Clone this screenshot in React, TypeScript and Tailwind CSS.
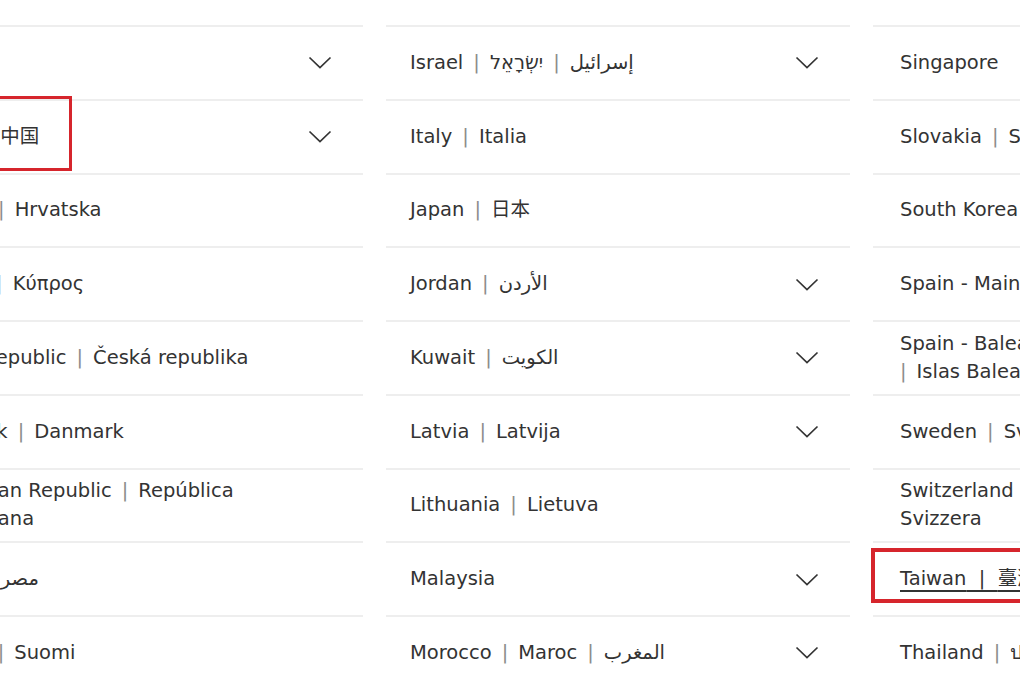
import type { ReactNode } from "react";

type Country = {
  names?: string[];
  custom?: ReactNode;
  menu?: boolean;
  link?: boolean;
};

function Pipe({ dark }: { dark?: boolean }) {
  if (dark) return <span>{"\u00a0 | \u00a0"}</span>;
  return <span className="mx-[10px] text-[#8c8c8c]">|</span>;
}

const columns: Country[][] = [
  [
    { names: ["Bulgaria", "България"] },
    { names: ["Canada"], menu: true },
    { names: ["China", "中国"], menu: true },
    { names: ["Croatia", "Hrvatska"] },
    { names: ["Cyprus", "Κύπρος"] },
    { names: ["Czech Republic", "Česká republika"] },
    { names: ["Denmark", "Danmark"] },
    {
      custom: (
        <>
          Dominican Republic<Pipe />República
          <br />
          Dominicana
        </>
      ),
    },
    { names: ["Egypt", "مصر"] },
    { names: ["Finland", "Suomi"] },
  ],
  [
    { names: ["Ireland", "Éire"] },
    { names: ["Israel", "יִשְׂרָאֵל", "إسرائيل"], menu: true },
    { names: ["Italy", "Italia"] },
    { names: ["Japan", "日本"] },
    { names: ["Jordan", "الأردن"], menu: true },
    { names: ["Kuwait", "الكويت"], menu: true },
    { names: ["Latvia", "Latvija"], menu: true },
    { names: ["Lithuania", "Lietuva"] },
    { names: ["Malaysia"], menu: true },
    { names: ["Morocco", "Maroc", "المغرب"], menu: true },
  ],
  [
    { names: ["Serbia", "Srbija"] },
    { names: ["Singapore"] },
    { names: ["Slovakia", "Slovensko"] },
    { names: ["South Korea", "대한민국"] },
    { names: ["Spain - Mainland", "España"] },
    {
      custom: (
        <>
          Spain - Balearic Islands
          <br />
          <span className="text-[#8c8c8c] mr-[10px]">|</span>Islas Baleares
        </>
      ),
    },
    { names: ["Sweden", "Sverige"] },
    {
      custom: (
        <>
          Switzerland<Pipe />Schweiz<Pipe />Suisse<Pipe />
          <br />
          Svizzera
        </>
      ),
    },
    { names: ["Taiwan", "臺灣"], link: true },
    { names: ["Thailand", "ประเทศไทย"] },
  ],
];

function Chevron() {
  return (
    <svg width="24" height="13" viewBox="0 0 24 13" fill="none" className="shrink-0">
      <polyline points="1.5,1.5 12,11.5 22.5,1.5" stroke="#333" strokeWidth="1.7" />
    </svg>
  );
}

function Label({ c }: { c: Country }) {
  if (c.custom) return <span>{c.custom}</span>;
  return (
    <span className={c.link ? "underline decoration-[1.5px] underline-offset-[5px]" : ""}>
      {c.names!.map((n, i) => (
        <span key={i}>
          {i > 0 && <Pipe dark={c.link} />}
          <bdi>{n}</bdi>
        </span>
      ))}
    </span>
  );
}

const pad = ["pl-[19px]", "pl-[24px]", "pl-[27px]"];

export default function App() {
  return (
    <div className="relative w-[1020px] h-[680px] overflow-hidden bg-white text-[#333] font-['DejaVu_Sans','Noto_Sans_CJK_SC','Noto_Sans',sans-serif] text-[19.5px] leading-[28px]">
      <div className="-ml-[101px] -mt-[48.75px] grid grid-cols-[464px_464px_464px] gap-x-[23px]">
        {columns.map((col, ci) => (
          <div key={ci} className="flex flex-col">
            {col.map((c, ri) => (
              <div
                key={ri}
                className={`flex items-center justify-between h-[73.75px] border-t-2 border-[#eeeeee] pr-[31px] ${pad[ci]}`}
              >
                <div className="whitespace-nowrap">
                  <Label c={c} />
                </div>
                {c.menu && <Chevron />}
              </div>
            ))}
          </div>
        ))}
      </div>

      <div className="absolute left-[-10px] top-[96px] w-[82px] h-[75px] border-[3px] border-[#d6252c]" />
      <div className="absolute left-[871px] top-[548px] w-[200px] h-[55px] border-[4px] border-[#d6252c]" />
    </div>
  );
}
